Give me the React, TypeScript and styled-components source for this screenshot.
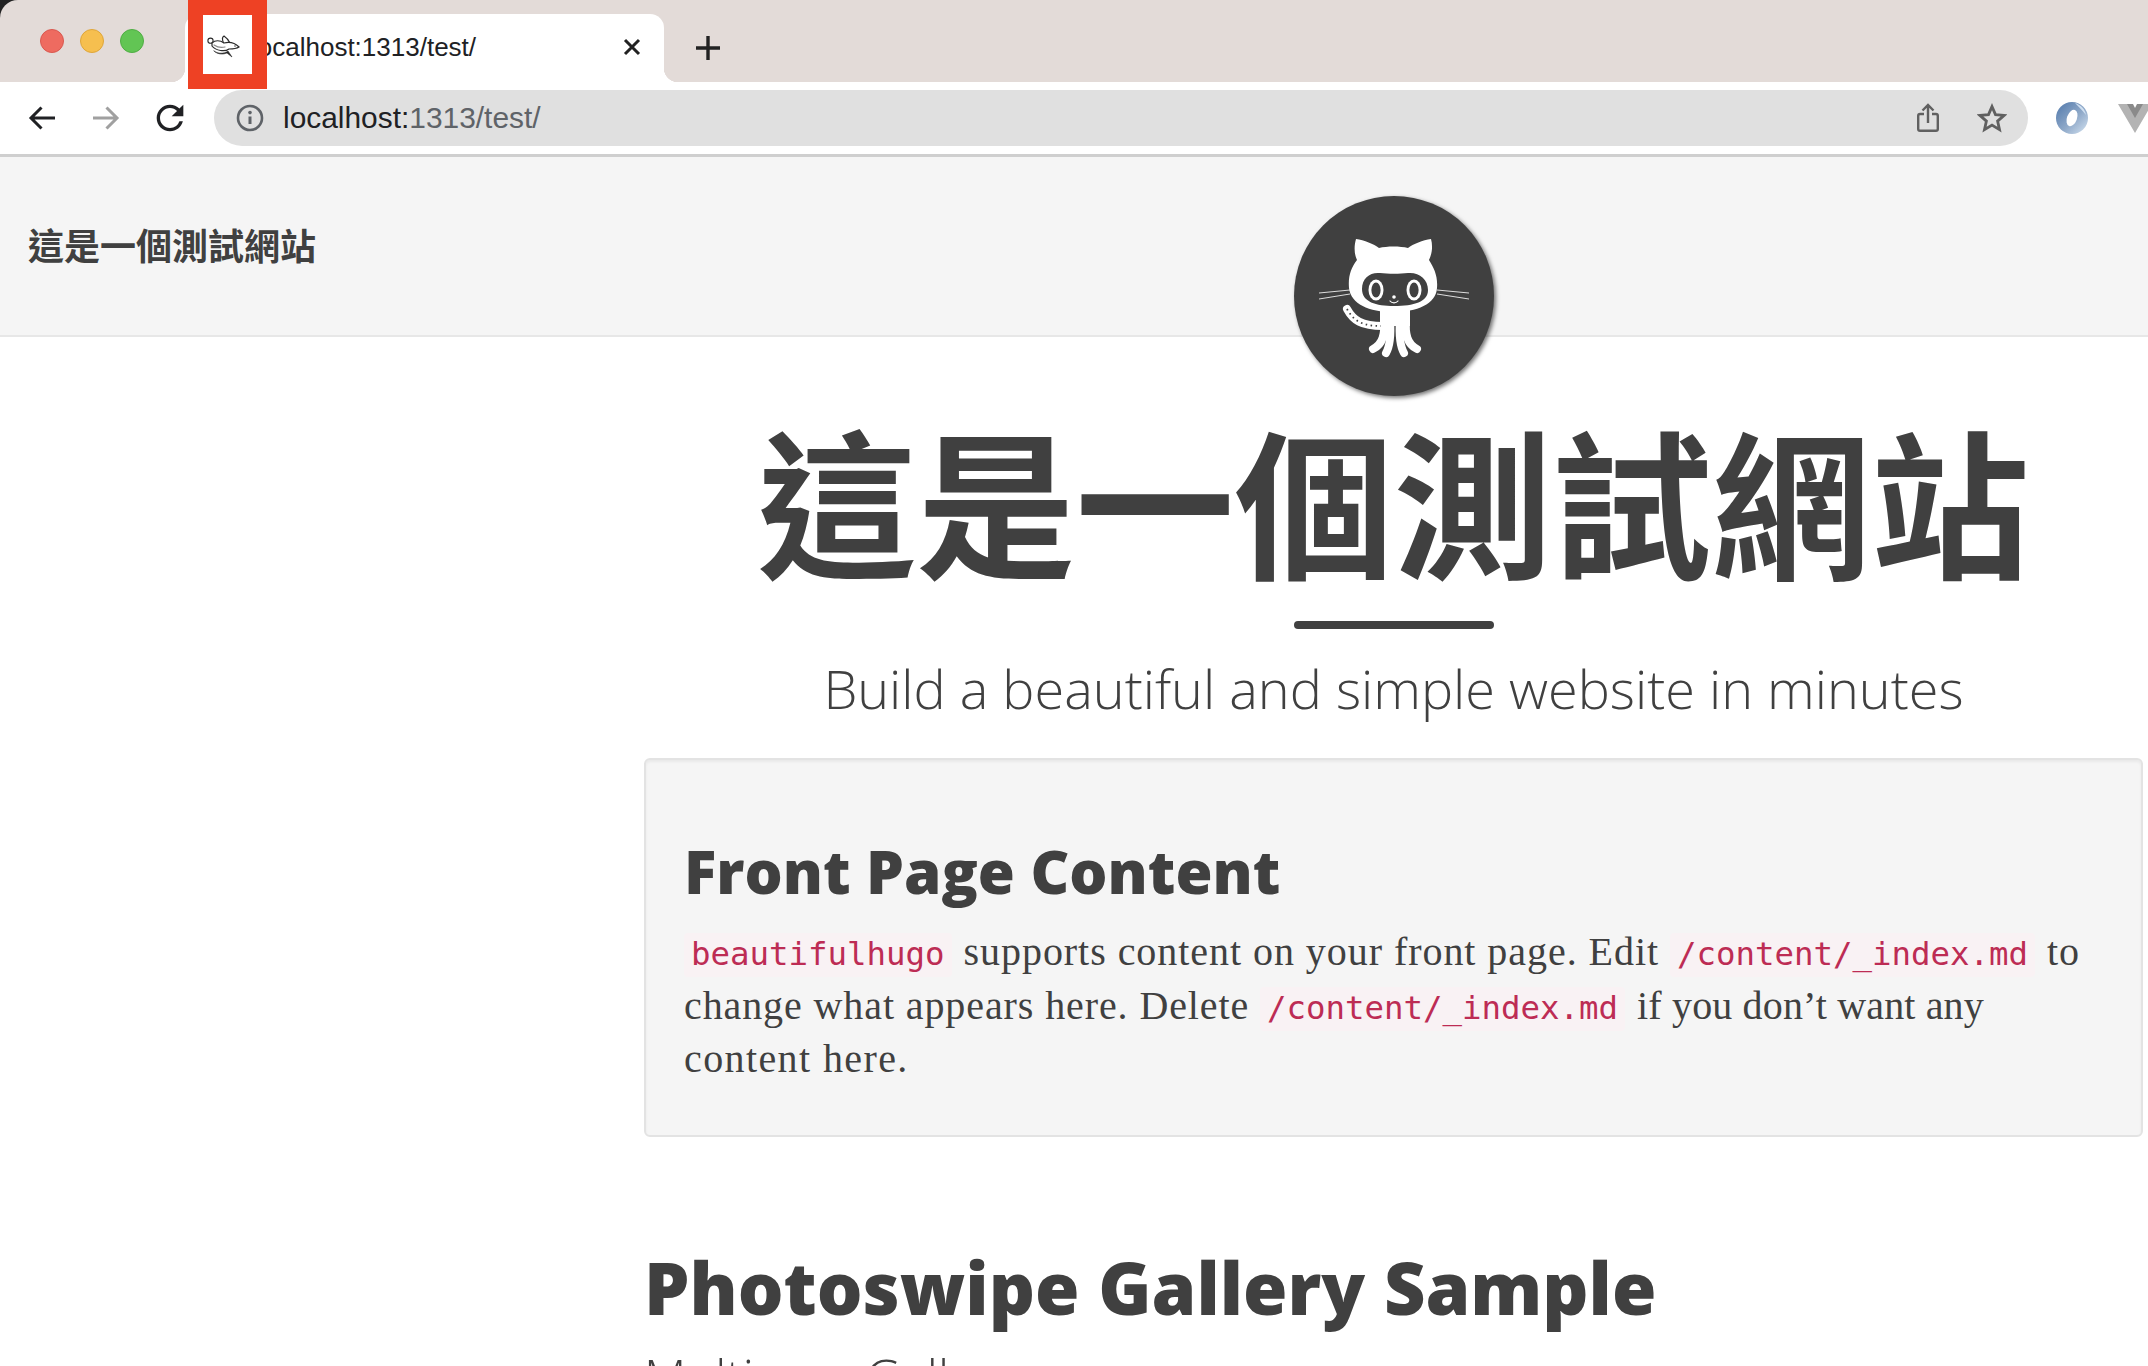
import styled, { createGlobalStyle } from "styled-components";

const GlobalStyle = createGlobalStyle`
  html, body {
    margin: 0;
    padding: 0;
    background: #fff;
    overflow: hidden;
  }
  * {
    box-sizing: border-box;
  }
`;

const Frame = styled.div`
  position: relative;
  width: 2148px;
  height: 1366px;
  overflow: hidden;
  background: #fff;
  color: #404040;
`;

/* browser chrome */
const Corner = styled.div`
  background: #222;
`;

const TabStrip = styled.div`
  display: flex;
  align-items: flex-end;
  height: 82px;
  background: #e3dbd8;
  border-top-left-radius: 18px;
`;

const Lights = styled.div`
  display: flex;
  align-items: center;
  gap: 16px;
  align-self: center;
  width: 185px;
  padding-left: 40px;
`;

const Light = styled.span<{ $color: string; $edge: string }>`
  width: 24px;
  height: 24px;
  border-radius: 50%;
  background: ${(p) => p.$color};
  border: 1px solid ${(p) => p.$edge};
`;

const Tab = styled.div`
  position: relative;
  display: flex;
  align-items: center;
  width: 479px;
  height: 68px;
  padding: 0 22px 2px 67px;
  background: #fff;
  border-radius: 14px 14px 0 0;
  font: 26px "Liberation Sans", Arial, sans-serif;
  color: #202124;

  &::before,
  &::after {
    content: "";
    position: absolute;
    bottom: 0;
    width: 14px;
    height: 14px;
  }
  &::before {
    left: -14px;
    background: radial-gradient(circle at 0 0, transparent 14px, #fff 14.5px);
  }
  &::after {
    right: -14px;
    background: radial-gradient(circle at 100% 0, transparent 14px, #fff 14.5px);
  }
`;

const TabTitle = styled.span`
  flex: 1;
`;

const NewTab = styled.div`
  display: flex;
  align-self: center;
  margin: 14px 0 0 31px;
`;

const Toolbar = styled.div`
  display: flex;
  align-items: center;
  height: 75px;
  padding-left: 10px;
  background: #fff;
  border-bottom: 3px solid #cfcfcf;
`;

const NavButton = styled.div`
  display: flex;
  flex: none;
  align-items: center;
  justify-content: center;
  width: 64px;
`;

const Omnibox = styled.div`
  display: flex;
  flex: none;
  align-items: center;
  width: 1814px;
  height: 56px;
  margin-left: 12px;
  padding: 0 21px 0 22px;
  border-radius: 28px;
  background: #e0e0e0;
  font: 29.9px "Liberation Sans", Arial, sans-serif;
  color: #5f6368;
`;

const Host = styled.span`
  color: #202124;
`;

const Url = styled.div`
  flex: 1;
  margin-left: 19px;
`;

const OmniActions = styled.div`
  display: flex;
  align-items: center;
  gap: 38px;
`;

const Extensions = styled.div`
  display: flex;
  flex: none;
  align-items: center;
  gap: 29px;
  margin-left: 27px;
`;

/* red marker drawn over the tab */
const Marker = styled.div`
  position: absolute;
  left: 188px;
  top: 0;
  width: 79px;
  height: 89px;
  display: flex;
  align-items: center;
  justify-content: center;
  padding: 5px 7px 0 0;
  background: #fff;
  border: 15px solid #ee4124;
`;

/* page */
const NavBar = styled.div`
  display: flex;
  align-items: center;
  height: 180px;
  padding: 0 0 4px 28px;
  background: #f5f5f5;
  border-bottom: 2px solid #e7e7e7;
  font: 700 36px "Noto Sans CJK TC", sans-serif;
  color: #404040;
`;

const Avatar = styled.div`
  position: absolute;
  left: 1294px;
  top: 196px;
  width: 200px;
  height: 200px;
  border-radius: 50%;
  background: #404040;
  box-shadow: 2px 2px 4px rgba(0, 0, 0, 0.55);
`;

const Main = styled.main`
  width: 1499px;
  margin-left: 644px;
`;

const Header = styled.header`
  padding-top: 73px;
  text-align: center;
`;

const SiteTitle = styled.h1`
  margin: 0;
  font: 700 159px/176px "Noto Sans CJK TC", sans-serif;
  color: #404040;
`;

const Rule = styled.hr`
  width: 200px;
  height: 8px;
  margin: 35px auto 0;
  border: 0;
  border-radius: 4px;
  background: #404040;
`;

const Subtitle = styled.div`
  margin-top: 22px;
  font: 300 54px/74px "Open Sans", sans-serif;
  color: #404040;
`;

const Well = styled.section`
  height: 379px;
  margin-top: 33px;
  padding: 70px 38px 0;
  background: #f5f5f5;
  border: 2px solid #e3e3e3;
  border-radius: 6px;
  box-shadow: inset 0 2px 3px rgba(0, 0, 0, 0.05);
`;

const WellTitle = styled.h2`
  margin: 0 0 13px;
  font: 800 60px/82px "Open Sans", sans-serif;
  color: #404040;
`;

const Para = styled.p`
  margin: 0;
  font: 40px/53.5px "Liberation Serif", "Times New Roman", serif;
  color: #404040;
`;

const Line = styled.span`
  display: block;
  white-space: nowrap;
`;

const Words = styled.span<{ $spacing: number }>`
  letter-spacing: ${(p) => p.$spacing}px;
`;

const Code = styled.code`
  display: inline-block;
  margin-right: 12px;
  padding: 0 7px 2px;
  font: 32.4px/42px "DejaVu Sans Mono", "Liberation Mono", monospace;
  color: #bd2c54;
  background: #f9f2f4;
  border-radius: 4px;
`;

const Section = styled.section`
  margin-top: 105px;
`;

const SectionTitle = styled.h2`
  margin: 0;
  font: 800 72px/90px "Open Sans", sans-serif;
  color: #404040;
`;

const SectionSub = styled.h3`
  margin: 12px 0 0;
  font: 300 49px/66px "Open Sans", sans-serif;
  color: #404040;
`;

const RabbitIcon = () => (
  <svg width="34" height="24" viewBox="0 0 34 24" fill="none" stroke="#2a2a2a" strokeLinecap="round">
    <circle cx="3.5" cy="5.7" r="2.6" fill="#fff" strokeWidth="1.1" />
    <path d="M17 9C15 5 15 2 17 1c3 2 5 5 6 7" fill="#fff" strokeWidth="1.1" />
    <path d="M5 8c3-3 8-3 12 0 4-1 10-1 15 4-3 2-7 2-10 2-4 3-13 2-17-3z" fill="#fff" strokeWidth="1.2" />
    <path d="M7 10c3 2 7 3 11 2" stroke="#8a8a8a" strokeWidth="1.2" />
    <path d="M7 16c4 3 10 3 14 0l4 6-5-4c-5 2-10 1-13-2z" fill="#222" strokeWidth="0.6" />
    <circle cx="28" cy="11" r="0.7" fill="#222" stroke="none" />
  </svg>
);

const CloseIcon = () => (
  <svg width="20" height="20" viewBox="0 0 20 20">
    <path d="M3 3l14 14M17 3L3 17" stroke="#222" strokeWidth="3" />
  </svg>
);

const PlusIcon = () => (
  <svg width="26" height="26" viewBox="0 0 26 26">
    <path d="M13 1v24M1 13h24" stroke="#222" strokeWidth="3.4" />
  </svg>
);

const ArrowIcon = ({ color, flip }: { color: string; flip?: boolean }) => (
  <svg width="28" height="24" viewBox="0 0 28 24" fill="none" style={flip ? { transform: "scaleX(-1)" } : undefined}>
    <path d="M27 12H3M13.5 1.5L3 12l10.5 10.5" stroke={color} strokeWidth="3" />
  </svg>
);

const ReloadIcon = () => (
  <svg width="40" height="40" viewBox="0 0 24 24">
    <path
      fill="#202124"
      d="M17.65 6.35A7.958 7.958 0 0 0 12 4c-4.42 0-7.99 3.58-7.99 8s3.57 8 7.99 8c3.73 0 6.84-2.55 7.73-6h-2.08A5.99 5.99 0 0 1 12 18c-3.31 0-6-2.69-6-6s2.69-6 6-6c1.66 0 3.14.69 4.22 1.78L13 11h7V4l-2.35 2.35z"
    />
  </svg>
);

const InfoIcon = () => (
  <svg width="28" height="28" viewBox="0 0 28 28" fill="none">
    <circle cx="14" cy="14" r="12" stroke="#5f6368" strokeWidth="2.6" />
    <path d="M14 12.5V20" stroke="#5f6368" strokeWidth="3" />
    <circle cx="14" cy="8.6" r="1.8" fill="#5f6368" />
  </svg>
);

const ShareIcon = () => (
  <svg width="22" height="30" viewBox="0 0 22 30" fill="none" stroke="#606060" strokeWidth="2.4">
    <path d="M7 11H3a1.8 1.8 0 0 0-1.8 1.8V26a1.8 1.8 0 0 0 1.8 1.8h16a1.8 1.8 0 0 0 1.8-1.8V12.8A1.8 1.8 0 0 0 19 11h-4" />
    <path d="M11 20V2M5.5 7.5L11 2l5.5 5.5" />
  </svg>
);

const StarIcon = () => (
  <svg width="30" height="30" viewBox="0 0 30 30" fill="none">
    <path
      d="M15 3.6l3.5 8 8.6.8-6.5 5.7 1.9 8.5L15 22.1l-7.5 4.5 1.9-8.5-6.5-5.7 8.6-.8z"
      stroke="#606060"
      strokeWidth="2.8"
      strokeLinejoin="miter"
    />
  </svg>
);

const RingIcon = () => (
  <svg width="34" height="34" viewBox="0 0 34 34">
    <defs>
      <linearGradient id="ring" x1="0" y1="0" x2="1" y2="1">
        <stop offset="0" stopColor="#4f77aa" />
        <stop offset="0.55" stopColor="#8fa9c9" />
        <stop offset="1" stopColor="#d5e3f1" />
      </linearGradient>
    </defs>
    <circle cx="17" cy="17" r="16" fill="url(#ring)" />
    <ellipse cx="17" cy="17" rx="5" ry="8.5" transform="rotate(20 17 17)" fill="#fff" />
    <path d="M20 2c6 2 10 6 11 12-3-4-6-7-11-12z" fill="#cfdff0" />
  </svg>
);

const VueIcon = () => (
  <svg width="34" height="30" viewBox="0 0 34 30">
    <path d="M0 1h11l6 10 6-10h11L17 30z" fill="#b3b3b3" />
    <path d="M9 1h6l2 4 2-4h6L17 15z" fill="#8a8a8a" />
  </svg>
);

const Octocat = () => (
  <svg width="200" height="200" viewBox="0 0 200 200" fill="none">
    <g stroke="#ddd" strokeWidth="1">
      <path d="M25 97l31-3M25 103l31-5M143 94l32 3M143 98l32 5" />
    </g>
    <path
      fill="#fff"
      d="M62 43c8 1 18 5 23 9 8-2 21-2 29 0 5-4 15-8 23-9 2 7 1 15-2 21 5 8 9 16 8 28-1 16-20 24-44 24S57 108 55 92c-1-12 2-20 8-28-3-6-3-14-1-21z"
    />
    <path
      fill="#404040"
      d="M68 93c0-11 8-17 18-16 8 1 20 1 28 0 11-1 20 6 20 17 0 12-14 16-34 16-18 0-32-4-32-17z"
    />
    <ellipse cx="82" cy="94" rx="7.5" ry="10.5" fill="#fff" />
    <ellipse cx="82" cy="94" rx="4.6" ry="7.5" fill="#404040" />
    <ellipse cx="120" cy="94" rx="7.5" ry="10.5" fill="#fff" />
    <ellipse cx="120" cy="94" rx="4.6" ry="7.5" fill="#404040" />
    <circle cx="100" cy="101" r="1.8" fill="#fff" />
    <path d="M96 105c2 2.5 6 2.5 8 0" stroke="#fff" strokeWidth="1.2" strokeLinecap="round" />
    <path fill="#fff" d="M86 112h30v18H86z" />
    <g stroke="#fff" strokeLinecap="round" strokeWidth="8">
      <path d="M90 124c1 14-1 24-11 29" />
      <path d="M96 124c1 14 0 26-4 33" />
      <path d="M106 124c-1 14 0 26 4 33" />
      <path d="M112 124c-1 14 1 24 11 29" />
    </g>
    <path d="M53 113c6 11 14 17 36 17" stroke="#fff" strokeWidth="8" strokeLinecap="round" />
    <path d="M53 113c6 11 14 17 34 17" stroke="#404040" strokeWidth="1.8" strokeDasharray="1.5 3.5" />
  </svg>
);

export default function App() {
  return (
    <>
      <GlobalStyle />
      <Frame>
        <Corner>
          <TabStrip>
            <Lights>
              <Light $color="#ee6b60" $edge="#d9584f" />
              <Light $color="#f6bf4f" $edge="#dfa63a" />
              <Light $color="#62c554" $edge="#50ad44" />
            </Lights>
            <Tab>
              <TabTitle>localhost:1313/test/</TabTitle>
              <CloseIcon />
            </Tab>
            <NewTab>
              <PlusIcon />
            </NewTab>
          </TabStrip>
        </Corner>
        <Toolbar>
          <NavButton>
            <ArrowIcon color="#202124" />
          </NavButton>
          <NavButton>
            <ArrowIcon color="#a0a0a0" flip />
          </NavButton>
          <NavButton>
            <ReloadIcon />
          </NavButton>
          <Omnibox>
            <InfoIcon />
            <Url>
              <Host>localhost:</Host>1313/test/
            </Url>
            <OmniActions>
              <ShareIcon />
              <StarIcon />
            </OmniActions>
          </Omnibox>
          <Extensions>
            <RingIcon />
            <VueIcon />
          </Extensions>
        </Toolbar>
        <Marker>
          <RabbitIcon />
        </Marker>
        <NavBar>這是一個測試網站</NavBar>
        <Avatar>
          <Octocat />
        </Avatar>
        <Main>
          <Header>
            <SiteTitle>這是一個測試網站</SiteTitle>
            <Rule />
            <Subtitle>Build a beautiful and simple website in minutes</Subtitle>
          </Header>
          <Well>
            <WellTitle>Front Page Content</WellTitle>
            <Para>
              <Line>
                <Code>beautifulhugo</Code>
                <Words $spacing={0.95}>supports content on your front page. Edit </Words>
                <Code>/content/_index.md</Code>
                <Words $spacing={0.9}>to</Words>
              </Line>
              <Line>
                <Words $spacing={0.9}>change what appears here. Delete </Words>
                <Code>/content/_index.md</Code>
                <Words $spacing={0.15}>if you don’t want any</Words>
              </Line>
              <Line>
                <Words $spacing={1.4}>content here.</Words>
              </Line>
            </Para>
          </Well>
          <Section>
            <SectionTitle>Photoswipe Gallery Sample</SectionTitle>
            <SectionSub>Multi-row Gallery</SectionSub>
          </Section>
        </Main>
      </Frame>
    </>
  );
}
